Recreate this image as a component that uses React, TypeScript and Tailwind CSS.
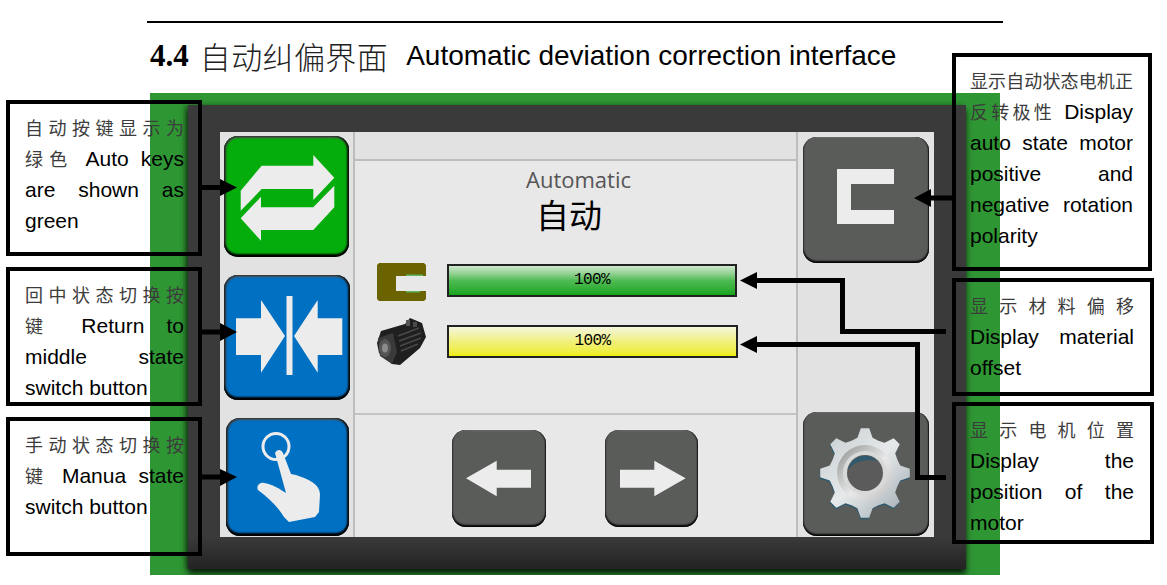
import React from 'react';

const Zh: React.FC<{ children: React.ReactNode }> = ({ children }) => (
  <span className="text-[18px] text-[#3c3c3c]">{children}</span>
);

// one printed line of a callout, stretched to the box width unless it is the last one
const Line: React.FC<{ children: React.ReactNode; last?: boolean }> = ({ children, last }) => (
  <div className={`h-[31px] leading-[31px] whitespace-nowrap ${last ? '' : 'text-justify [text-align-last:justify]'}`}>
    {children}
  </div>
);

const Callout: React.FC<{ className: string; children: React.ReactNode }> = ({ className, children }) => (
  <div className={`absolute border-4 border-black pt-[8px] text-[21px] text-black font-['Liberation_Sans','Noto_Sans_CJK_SC',sans-serif] ${className}`}>
    {children}
  </div>
);

const colorEdge = 'shadow-[inset_0_-3px_2px_#000,inset_-2px_0_2px_#111,inset_2px_0_2px_#333,inset_0_2px_2px_#555]';
const greyEdge = 'shadow-[inset_0_-2px_2px_#000,inset_-1px_0_1px_#222,inset_1px_0_1px_#444,inset_0_1px_1px_#777]';

const HmiButton: React.FC<{ className: string; viewBox: string; children: React.ReactNode }> = ({
  className,
  viewBox,
  children,
}) => (
  <div className={`rounded-[14px] shrink-0 overflow-hidden ${className}`}>
    <svg viewBox={viewBox} className="w-full h-full block">
      {children}
    </svg>
  </div>
);

const Gear: React.FC = () => {
  const cx = 865;
  const cy = 473;
  const teeth = 8;
  const pts: string[] = [];
  for (let i = 0; i < teeth; i++) {
    const a = (i * Math.PI * 2) / teeth - Math.PI / 2;
    const step = (Math.PI * 2) / teeth;
    const p = (r: number, t: number) =>
      `${(cx + r * Math.cos(a + t * step)).toFixed(1)},${(cy + r * Math.sin(a + t * step)).toFixed(1)}`;
    pts.push(p(35, -0.5), p(36, -0.27), p(45, -0.12), p(45, 0.12), p(36, 0.27));
  }
  return (
    <>
      <defs>
        <linearGradient id="gearFace" x1="0" y1="0" x2="1" y2="1">
          <stop offset="0" stopColor="#c4ccd0" />
          <stop offset="0.5" stopColor="#e6e9ea" />
          <stop offset="1" stopColor="#9aa6ac" />
        </linearGradient>
        <linearGradient id="gearRing" x1="0" y1="0" x2="1" y2="1">
          <stop offset="0" stopColor="#8e9090" />
          <stop offset="0.55" stopColor="#e8e8e8" />
          <stop offset="1" stopColor="#bcbcbc" />
        </linearGradient>
      </defs>
      <polygon points={pts.join(' ')} fill="#2f5a6e" transform="translate(-0.5 1.5)" />
      <polygon points={pts.join(' ')} fill="url(#gearFace)" />
      <circle cx={cx} cy={cy} r={28} fill="url(#gearRing)" />
      <circle cx={cx} cy={cy} r={22} fill="#d8dada" />
      <circle cx={cx} cy={cy} r={18} fill="#5a5b5a" />
      <path d="M848 471 a17 17 0 0 1 29 -10 a22 16 0 0 0 -29 10z" fill="#2f5a6e" />
    </>
  );
};

export default function App() {
  return (
    <div className="relative w-[1167px] h-[585px] overflow-hidden bg-white font-['Liberation_Sans','Noto_Sans_CJK_SC',sans-serif]">
      <div className="ml-[147px] mt-[21px] w-[856px] h-[2px] bg-black" />

      {/* Heading */}
      <div className="ml-[150px] mt-[13px] h-[40px] flex items-center text-black whitespace-nowrap leading-[40px]">
        <span className="font-bold text-[31px] font-['Liberation_Serif',serif]">4.4</span>
        <span className="ml-[11px] text-[31px] tracking-[0.4px] text-[#222] font-['Noto_Sans_CJK_SC',sans-serif] font-light">自动纠偏界面</span>
        <span className="ml-[18px] text-[28px]">Automatic deviation correction interface</span>
      </div>

      {/* Panel photo */}
      <div className="ml-[150px] mt-[17px] w-[850px] h-[482px] bg-[#2f9634] pl-[38px] pt-[12px] overflow-hidden">
        <div className="w-[778px] h-[464px] bg-[linear-gradient(#3a3a3a_93%,#232323)] pl-[32px] pt-[27px] shadow-[0_5px_6px_rgba(0,0,0,0.75),-3px_0_5px_rgba(0,0,0,0.35)]">
          <div className="flex w-[714px] h-[405px] bg-[#e2e2e2]">
            {/* Left keys */}
            <div className="w-[135px] shrink-0 border-r-2 border-[#bdbdbd] pt-[4px] pl-[4px] flex flex-col">
              <HmiButton className={`w-[125px] h-[121px] bg-[#05ad0c] ${colorEdge}`} viewBox="224 136 125 121">
                <polygon
                  points="240.7,210.7 240.7,190.7 261.7,165.7 313.3,165.7 313.3,155 334.3,177.7 313.3,200 313.3,189 261.7,189"
                  fill="#ececec"
                />
                <polygon
                  points="334.3,185.7 334.3,207.3 313.3,230 261,230 261,240.7 240.7,218.3 261,196.7 261,207.3 313.3,207.3"
                  fill="#ececec"
                />
              </HmiButton>
              <HmiButton className={`mt-[18px] w-[126px] h-[125px] bg-[#0070c2] ${colorEdge}`} viewBox="224 275 126 125">
                <polygon points="236,318.3 261,318.3 261,300 285,336 261,372.7 261,355 236,355" fill="#ececec" />
                <rect x="286.5" y="296" width="6" height="79" fill="#ececec" />
                <polygon points="342.3,318.3 317.7,318.3 317.7,300 294,336 317.7,372.7 317.7,355 342.3,355" fill="#ececec" />
              </HmiButton>
              <HmiButton className={`mt-[18px] ml-[2px] w-[123px] h-[118px] bg-[#0070c2] ${colorEdge}`} viewBox="226 418 123 118">
                <circle cx="276" cy="446.5" r="13" fill="none" stroke="#ececec" strokeWidth="3" />
                <path
                  d="M275 453 C277 449 281 449 283 453 L291 474 C297 475 306 478 312 482 C318 486 320 490 320 495 L319 512 L315 517 L289 522 L284 517 C278 507 270 499 258 490 C256 487 259 482 264 483 C272 484 280 489 286 493 Z"
                  fill="#ececec"
                />
              </HmiButton>
            </div>

            {/* Centre readout */}
            <div className="w-[441px] shrink-0 flex flex-col bg-[#e8e8e8]">
              <div className="h-[29px] shrink-0 bg-[#e2e2e2] border-b-2 border-[#bdbdbd]" />
              <div className="h-[254px] shrink-0 border-b-2 border-[#c4c4c4] flex flex-col">
                <div className="mt-[6px] h-[25px] leading-[25px] text-center text-[22px] text-[#555] font-['Open_Sans',sans-serif] pl-[6px]">
                  Automatic
                </div>
                <div className="h-[44px] leading-[44px] text-center text-[33px] text-black font-['Noto_Sans_CJK_SC',sans-serif] pr-[13px]">
                  自动
                </div>
                <div className="mt-[27px] ml-[22px] flex items-start">
                  <svg viewBox="377 263 49 38" className="w-[49px] h-[38px] shrink-0">
                    <path d="M379 263 H424 L426 265 V276 H396 V291 H426 V299 L424 301 H379 L377 299 V265 Z" fill="#6b6300" />
                    <rect x="406" y="274.5" width="17" height="1.5" fill="#5fb65f" />
                    <rect x="406" y="291" width="14" height="1.5" fill="#5fb65f" />
                  </svg>
                  <div className="mt-[1px] ml-[21px] w-[290px] h-[33px] border-2 border-[#222] bg-gradient-to-b from-[#cfe8d0] via-[#4fbb54] to-[#12a518] text-center text-[16px] tracking-[-0.6px] leading-[29px] text-black font-['Liberation_Mono',monospace]">
                    100%
                  </div>
                </div>
                <div className="mt-[17px] ml-[21px] flex items-start">
                  <svg viewBox="376 318 50 48" className="w-[50px] h-[48px] shrink-0">
                    <polygon
                      points="377,343 381,331 405,324 410,318 422,323 426,337 420,348 400,365 392,364 379,353"
                      fill="#1f1f1f"
                    />
                    <polygon points="378,338 393,333 397,352 392,364 380,356" fill="#3a3a3a" />
                    <ellipse cx="385" cy="348" rx="6" ry="9" fill="#555" />
                    <ellipse cx="385" cy="348" rx="3" ry="4.5" fill="#8a8a8a" />
                    <path d="M398 336 L419 328 M399 341 L421 333 M400 346 L421 338 M401 351 L418 344" stroke="#494949" strokeWidth="1.5" />
                    <rect x="406" y="320" width="4" height="6" fill="#555" />
                    <rect x="413" y="322" width="4" height="5" fill="#4a4a4a" />
                  </svg>
                  <div className="mt-[7px] ml-[21px] w-[291px] h-[33px] border-2 border-[#222] bg-gradient-to-b from-[#f5f5dc] via-[#f0f07a] to-[#eeee00] text-center text-[16px] tracking-[-0.6px] leading-[29px] text-black font-['Liberation_Mono',monospace]">
                    100%
                  </div>
                </div>
              </div>
              <div className="flex pl-[97px] pt-[15px]">
                <HmiButton className={`w-[94px] h-[97px] bg-[#5a5c5a] rounded-[8px] ${greyEdge}`} viewBox="452 431 94 97">
                  <polygon points="466,479.3 496.7,461.7 496.7,470.7 531,470.7 531,488.7 496.7,488.7 496.7,497.3" fill="#ececec" />
                </HmiButton>
                <HmiButton className={`ml-[59px] w-[93px] h-[97px] bg-[#5a5c5a] rounded-[8px] ${greyEdge}`} viewBox="605 431 93 97">
                  <polygon points="620,470.7 654.3,470.7 654.3,461.7 685.7,479.3 654.3,497.3 654.3,488.7 620,488.7" fill="#ececec" />
                </HmiButton>
              </div>
            </div>

            {/* Right keys */}
            <div className="flex-1 border-l-2 border-[#bdbdbd] pl-[5px] pt-[5px] flex flex-col">
              <HmiButton className={`w-[126px] h-[126px] bg-[#5a5c5a] ${greyEdge}`} viewBox="803 137 126 126">
                <polygon points="837,169 894,169 894,184 851,184 851,210 894,210 894,224 837,224" fill="#ececec" />
              </HmiButton>
              <HmiButton className={`mt-[149px] w-[126px] h-[124px] bg-[#5a5c5a] ${greyEdge}`} viewBox="803 412 126 124">
                <Gear />
              </HmiButton>
            </div>
          </div>
        </div>
      </div>

      {/* Leader lines */}
      <svg viewBox="0 0 1167 585" className="absolute inset-0 w-[1167px] h-[585px] pointer-events-none">
        <path d="M202 187.5 H222 M202 332 H222 M202 477 H222 M952 198 H930" stroke="#000" strokeWidth="5" fill="none" />
        <polygon points="237,187.5 220,179 220,196" fill="#000" />
        <polygon points="237,332 220,323 220,341" fill="#000" />
        <polygon points="237,477 220,469 220,486" fill="#000" />
        <polygon points="914,198 931,189 931,207" fill="#000" />
        <path d="M946 331.5 H842.5 V280.5 H755" stroke="#000" strokeWidth="5" fill="none" />
        <path d="M946 477.5 H917.5 V344.5 H755" stroke="#000" strokeWidth="5" fill="none" />
        <polygon points="740,280.5 757,272 757,289" fill="#000" />
        <polygon points="740,344.5 757,336 757,353" fill="#000" />
      </svg>

      {/* Callouts */}
      <Callout className="left-[6px] top-[100px] w-[196px] h-[156px] pl-[15px] pr-[14px]">
        <Line><Zh>自动按键显示为</Zh></Line>
        <Line><Zh>绿色</Zh> Auto keys</Line>
        <Line>are shown as</Line>
        <Line last>green</Line>
      </Callout>
      <Callout className="left-[6px] top-[267px] w-[196px] h-[139px] pl-[15px] pr-[14px]">
        <Line><Zh>回中状态切换按</Zh></Line>
        <Line><Zh>键</Zh> Return to</Line>
        <Line>middle state</Line>
        <Line last>switch button</Line>
      </Callout>
      <Callout className="left-[6px] top-[417px] w-[196px] h-[139px] pl-[15px] pr-[14px]">
        <Line><Zh>手动状态切换按</Zh></Line>
        <Line><Zh>键</Zh> Manua state</Line>
        <Line last>switch button</Line>
      </Callout>
      <Callout className="left-[952px] top-[53px] w-[200px] h-[218px] pl-[14px] pr-[15px]">
        <Line><Zh>显示自动状态电机正</Zh></Line>
        <Line><Zh>反转极性</Zh> Display</Line>
        <Line>auto state motor</Line>
        <Line>positive and</Line>
        <Line>negative rotation</Line>
        <Line last>polarity</Line>
      </Callout>
      <Callout className="left-[952px] top-[278px] w-[202px] h-[118px] pl-[14px] pr-[16px]">
        <Line><Zh>显示材料偏移</Zh></Line>
        <Line>Display material</Line>
        <Line last>offset</Line>
      </Callout>
      <Callout className="left-[952px] top-[402px] w-[202px] h-[142px] pl-[14px] pr-[16px]">
        <Line><Zh>显示电机位置</Zh></Line>
        <Line>Display the</Line>
        <Line>position of the</Line>
        <Line last>motor</Line>
      </Callout>
    </div>
  );
}
